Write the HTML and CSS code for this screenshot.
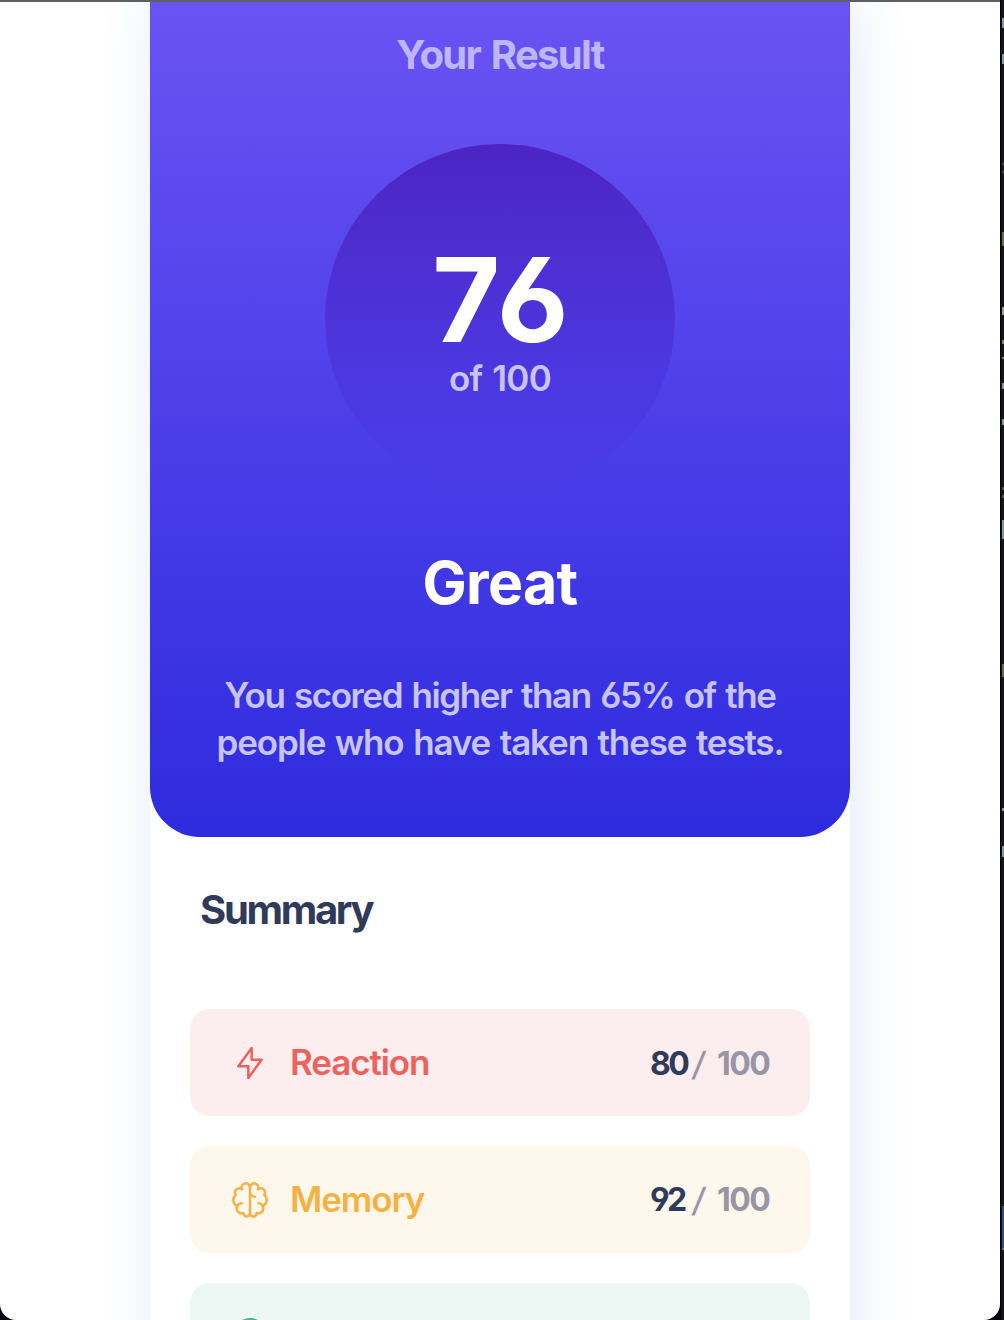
FILE: index.html
```html
<!DOCTYPE html>
<html lang="en">
<head>
<meta charset="utf-8">
<title>Results summary</title>
<link rel="stylesheet" href="styles.css">
</head>
<body>
<div class="window">
  <main class="card">
    <section class="result">
      <h1 class="result-title">Your Result</h1>
      <div class="score">
        <strong class="score-value">76</strong>
        <span class="score-total">of 100</span>
      </div>
      <h2 class="grade">Great</h2>
      <p class="message">You scored higher than 65% of the<br><span class="message-end">people who have taken these tests.</span></p>
    </section>
    <section class="summary">
      <h2 class="summary-title">Summary</h2>
      <ul class="stats">
        <li class="stat reaction">
          <svg class="icon" viewBox="0 0 20 20"><path d="M10.833 8.333V2.5l-6.666 9.167h5V17.5l6.666-9.167h-5Z"/></svg>
          <span class="name">Reaction</span>
          <span class="points"><b>80</b><i>/</i><em>100</em></span>
        </li>
        <li class="stat memory">
          <svg class="icon" viewBox="0 0 20 20"><path d="M5.833 11.667a2.5 2.5 0 1 0 .834 4.858"/><path d="M3.553 13.004a3.333 3.333 0 0 1-.728-5.53m.025-.067a2.083 2.083 0 0 1 2.983-2.824m.199.054A2.083 2.083 0 1 1 10 3.75v12.917a1.667 1.667 0 0 1-3.333 0M10 5.833a2.5 2.5 0 0 0 2.5 2.5m1.667 3.334a2.5 2.5 0 1 1-.834 4.858"/><path d="M16.447 13.004a3.334 3.334 0 0 0 .728-5.53m-.025-.067a2.083 2.083 0 0 0-2.983-2.824M10 3.75a2.085 2.085 0 0 1 2.538-2.033 2.084 2.084 0 0 1 1.43 2.92m-.635 12.03a1.667 1.667 0 0 1-3.333 0"/></svg>
          <span class="name">Memory</span>
          <span class="points"><b>92</b><i>/</i><em>100</em></span>
        </li>
        <li class="stat verbal">
          <svg class="icon" viewBox="0 0 20 20"><path d="M10 18.333a8.333 8.333 0 1 0-7.512-4.722c.157.326.21.694.111 1.042l-.994 3.712 3.711-.994c.349-.1.717-.046 1.043.111a8.302 8.302 0 0 0 3.64.85Z"/></svg>
        </li>
      </ul>
    </section>
  </main>
</div>
<div class="edge"></div>
</body>
</html>
```
FILE: styles.css
```css
* { box-sizing: border-box; margin: 0; padding: 0; }

body {
  display: flex;
  width: 1004px;
  height: 1320px;
  overflow: hidden;
  background: #07030f;
  font-family: Inter, "Liberation Sans", sans-serif;
  font-feature-settings: "ss01";
}

.window {
  width: 1000px;
  height: 1320px;
  overflow: hidden;
  background: #fff;
  border-top: 2px solid #605e65;
  border-radius: 0 0 16px 16px;
}

.card {
  width: 700px;
  height: 1500px;
  margin: 0 auto;
  background: #fff;
  box-shadow: 5px 0 50px rgba(61, 108, 236, 0.15);
}

.result {
  display: flex;
  flex-direction: column;
  align-items: center;
  height: 835px;
  padding-top: 27px;
  border-radius: 0 0 50px 50px;
  background: linear-gradient(#6a53f3, #2e2bde);
  color: #c7c4fb;
  text-align: center;
}

.result-title {
  font-size: 40px;
  line-height: 52px;
  font-weight: 700;
  letter-spacing: -1.7px;
  word-spacing: 3px;
  color: #bdb6fa;
}

.score {
  display: flex;
  flex-direction: column;
  align-items: center;
  width: 350px;
  height: 350px;
  margin-top: 63px;
  padding-top: 96px;
  border-radius: 50%;
  background: linear-gradient(#4b24c3, rgba(72, 50, 222, 0.5) 75%, rgba(67, 56, 230, 0));
}

.score-value {
  padding-left: 4px;
  font-size: 117px;
  line-height: 120px;
  font-weight: 700;
  letter-spacing: 3px;
  color: #fff;
}

.score-total {
  font-size: 35px;
  line-height: 44px;
  font-weight: 600;
  letter-spacing: -0.8px;
  word-spacing: 2px;
  margin-top: -4px;
}

.grade {
  margin-top: 49px;
  font-size: 59px;
  line-height: 80px;
  font-weight: 700;
  letter-spacing: -0.7px;
  color: #fff;
}

.message {
  margin-top: 49px;
  font-size: 35px;
  line-height: 47px;
  font-weight: 600;
  letter-spacing: -1.4px;
  word-spacing: 2px;
  white-space: nowrap;
}

.message-end { letter-spacing: -1.15px; }

.summary { padding: 47px 40px 0; }

.summary-title {
  padding-left: 10px;
  font-size: 40px;
  line-height: 52px;
  font-weight: 700;
  letter-spacing: -2.3px;
  color: #303b5a;
}

.stats {
  display: grid;
  gap: 30px;
  margin-top: 73px;
  list-style: none;
}

.stat {
  display: flex;
  align-items: center;
  height: 107px;
  padding: 0 40px;
  border-radius: 20px;
}

.icon {
  width: 40px;
  height: 40px;
  margin-right: 20px;
  fill: none;
  stroke: currentColor;
  stroke-width: 1.25;
  stroke-linecap: round;
  stroke-linejoin: round;
}

.name {
  padding-bottom: 2px;
  font-size: 35px;
  line-height: 48px;
  font-weight: 600;
  letter-spacing: -1.1px;
}

.points {
  display: flex;
  margin-left: auto;
  padding-top: 2px;
  font-size: 32px;
  line-height: 40px;
  color: #9896a4;
}

.points b { width: 43px; color: #303b5a; font-weight: 700; letter-spacing: -2.6px; }
.points i { width: 24px; font-size: 33px; font-style: normal; font-weight: 500; transform: skewX(-8deg); }
.points em { width: 53px; font-style: normal; font-weight: 700; letter-spacing: -1.6px; }

.reaction { background: #fceeef; color: #ec625d; }
.memory { background: #fef7eb; color: #f3b245; }
.memory .points { padding-top: 0; }
.verbal { padding-bottom: 2px; background: #edf7f4; color: #49b48e; }

/* sliver of the dark editor behind the window */
.edge {
  width: 4px;
  height: 1320px;
  border-left: 1px solid #000;
  background: #141416;
}

.edge::before {
  content: "";
  display: block;
  width: 2px;
  height: 1320px;
  margin-left: 1px;
  background: linear-gradient(#0000 18px, #7898ac 18px 28px, #0000 28px 54px, #7898ac 54px 64px, #0000 64px 163px, #444 163px 165px, #0000 165px 171px, #444 171px 173px, #0000 173px 232px, #56733f 232px 246px, #0000 246px 307px, #999 307px 315px, #0000 315px 340px, #8a7b50 340px 344px, #0000 344px 357px, #8a7b50 357px 359px, #0000 359px 383px, #7898ac 383px 389px, #0000 389px 419px, #7898ac 419px 425px, #0000 425px 487px, #554 487px 490px, #0000 490px 495px, #554 495px 498px, #0000 498px 520px, #7898ac 520px 539px, #0000 539px 664px, #56733f 664px 677px, #0000 677px 808px, #7898ac 808px 811px, #0000 811px 846px, #7898ac 846px 857px, #0000 857px 1206px, #225085 1206px 1248px, #4a6b91 1248px 1250px, #0000 1250px);
}
```
